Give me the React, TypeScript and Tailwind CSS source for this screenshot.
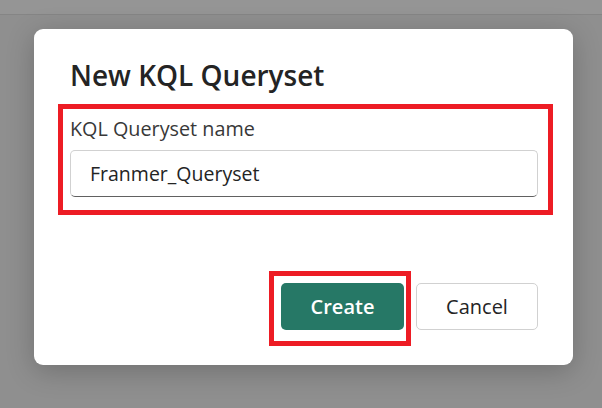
export default function App() {
  return (
    <div className="relative h-[408px] w-[602px] overflow-hidden bg-[#8f8f8f] font-['Open_Sans',sans-serif]">
      <div className="h-[15px] border-b border-[#858585] bg-[#959595]" />
      <div className="ml-[34px] mt-[14px] flex h-[336px] w-[539px] flex-col rounded-[9px] bg-white pl-[36px] pr-[35px] shadow-[0_6px_28px_rgba(0,0,0,0.22)]">
        <h1 className="mt-[26px] text-[28px] font-semibold leading-[40px] text-[#242424]">New KQL Queryset</h1>

        <div className="relative mt-[16px]">
          <div className="pointer-events-none absolute -top-[7px] -left-[12px] -right-[15px] -bottom-[18px] border-[5px] border-[#ed1c24]" />
          <label className="block h-[36px] text-[19.8px] leading-[36px] text-[#383838]">KQL Queryset name</label>
          <div className="mt-[3px] flex h-[47px] items-center rounded-[5px] border border-[#d1d1d1] border-b-[#616161] pl-[19px] text-[19.5px] text-[#242424]">
            Franmer_Queryset
          </div>
        </div>

        <div className="mt-auto mb-[35px] flex justify-end gap-3">
          <div className="relative">
            <div className="pointer-events-none absolute -top-[12px] -left-[12px] -right-[7px] -bottom-[16px] border-[5px] border-[#ed1c24]" />
            <button className="flex h-[47px] w-[123px] items-center justify-center rounded-[5px] bg-[#267866] text-[20px] font-semibold text-white">
              Create
            </button>
          </div>
          <button className="flex h-[47px] w-[122px] items-center justify-center rounded-[5px] border border-[#d1d1d1] bg-white text-[20px] text-[#242424]">
            Cancel
          </button>
        </div>
      </div>
    </div>
  );
}
